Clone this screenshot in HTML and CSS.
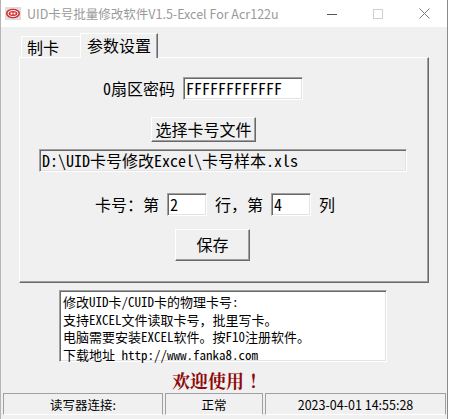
FILE: index.html
```html
<!DOCTYPE html>
<html lang="zh-CN">
<head>
<meta charset="utf-8">
<title>UID卡号批量修改软件</title>
<link rel="stylesheet" href="styles.css">
</head>
<body>
<div class="window">
  <div class="titlebar">
    <svg class="app-icon" width="16" height="13" viewBox="0 0 16 13">
      <rect x="0" y="0" width="16" height="13" fill="#dedede"/>
      <ellipse cx="8" cy="6.5" rx="7" ry="4.8" fill="#d42a2a"/>
      <ellipse cx="8" cy="6.5" rx="5.4" ry="3.4" fill="#ffffff"/>
      <ellipse cx="8" cy="6.5" rx="4.4" ry="2.5" fill="#d42a2a"/>
      <rect x="5.5" y="5.5" width="2" height="2" fill="#ffffff"/>
      <rect x="8.5" y="5.5" width="2" height="2" fill="#ffffff"/>
    </svg>
    <span class="title">UID卡号批量修改软件V1.5-Excel For Acr122u</span>
    <div class="controls">
      <span class="ctl"><svg width="10" height="10" viewBox="0 0 10 10"><path d="M0 5.5H10" stroke="#555" stroke-width="1"/></svg></span>
      <span class="ctl"><svg width="10" height="10" viewBox="0 0 10 10"><rect x="0.5" y="0.5" width="9" height="9" fill="none" stroke="#cfcfcf" stroke-width="1"/></svg></span>
      <span class="ctl"><svg width="11" height="11" viewBox="0 0 11 11"><path d="M0.5 0.5L10.5 10.5M10.5 0.5L0.5 10.5" stroke="#7a7a7a" stroke-width="1"/></svg></span>
    </div>
  </div>

  <div class="client">
    <div class="tabs">
      <div class="tab">制卡</div>
      <div class="tab active">参数设置</div>
    </div>
    <div class="panel">
      <div class="row pwd-row">
        <span class="lbl">0扇区密码</span>
        <div class="edit pwd">FFFFFFFFFFFF</div>
      </div>
      <div class="btn choose">选择卡号文件</div>
      <div class="edit path">D:\UID卡号修改Excel\卡号样本.xls</div>
      <div class="row pos-row">
        <span class="lbl">卡号：第</span>
        <div class="edit num">2</div>
        <span class="lbl">行，第</span>
        <div class="edit num">4</div>
        <span class="lbl">列</span>
      </div>
      <div class="btn save">保存</div>
    </div>
    <div class="info">
      <div class="line">修改UID卡/CUID卡的物理卡号:</div>
      <div class="line">支持EXCEL文件读取卡号，批里写卡。</div>
      <div class="line">电脑需要安装EXCEL软件。按F10注册软件。</div>
      <div class="line">下载地址 http://www.fanka8.com</div>
    </div>
    <div class="welcome">欢迎使用<span class="bang">！</span></div>
  </div>

  <div class="statusbar">
    <div class="sb sb1">读写器连接:</div>
    <div class="sb sb2">正常</div>
    <div class="sb sb3">2023-04-01 14:55:28</div>
  </div>
</div>
</body>
</html>
```
FILE: styles.css
```css
* { box-sizing: border-box; }
html, body { margin: 0; padding: 0; }
body {
  width: 449px;
  height: 419px;
  overflow: hidden;
  background: #ffffff;
  font-family: "Noto Sans CJK SC", sans-serif;
  color: #000;
}
.window {
  width: 448px;
  height: 419px;
  border-left: 1px solid #b5b5b5;
  border-right: 1px solid #8a8a8a;
  background: #f0f0f0;
  display: flex;
  flex-direction: column;
}
.titlebar {
  height: 27px;
  flex: none;
  background: #fff;
  display: flex;
  align-items: center;
}
.app-icon { margin-left: 4px; flex: none; }
.title {
  margin-left: 6px;
  font-size: 12.5px;
  color: #9a9a9a;
  white-space: nowrap;
}
.controls { margin-left: auto; display: flex; height: 27px; }
.ctl {
  width: 46px;
  height: 27px;
  display: flex;
  align-items: center;
  justify-content: center;
}

.client {
  height: 366px;
  flex: none;
  padding-top: 6px;
  font-family: "Noto Sans Mono CJK SC", "Noto Sans CJK SC", monospace;
  font-size: 16px;
}
.tabs {
  display: flex;
  align-items: flex-end;
  margin-left: 20px;
  height: 24px;
  position: relative;
  z-index: 1;
}
.tab {
  width: 59px;
  height: 21px;
  border-top: 1px solid #fff;
  border-left: 1px solid #fff;
  padding-left: 5px;
  line-height: 20px;
  white-space: nowrap;
}
.tab.active {
  width: 78px;
  height: 25px;
  margin-bottom: -1px;
  background: #f0f0f0;
  border-right: 1px solid #696969;
  box-shadow: inset -1px 0 0 #a0a0a0;
  padding-left: 6px;
  line-height: 22px;
}
.panel {
  margin-left: 18px;
  width: 410px;
  height: 226px;
  border-top: 1px solid #fff;
  border-left: 1px solid #fff;
  border-right: 1px solid #696969;
  border-bottom: 1px solid #696969;
  box-shadow: inset -1px -1px 0 #a0a0a0;
  display: flex;
  flex-direction: column;
  align-items: flex-start;
}
.row { display: flex; align-items: center; gap: 8px; }
.lbl { white-space: nowrap; line-height: 23px; }
.edit {
  height: 23px;
  background: #fff;
  border: 1px solid;
  border-color: #a0a0a0 #ffffff #ffffff #a0a0a0;
  box-shadow: inset 1px 1px 0 #696969, inset -1px -1px 0 #e3e3e3;
  padding-left: 2px;
  line-height: 21px;
  white-space: nowrap;
  overflow: hidden;
}
.pwd-row { margin-top: 19px; padding-left: 83px; }
.pwd { width: 120px; }
.btn {
  height: 25px;
  background: #f0f0f0;
  border: 1px solid;
  border-color: #ffffff #696969 #696969 #ffffff;
  box-shadow: inset -1px -1px 0 #a0a0a0;
  text-align: center;
  line-height: 22px;
  white-space: nowrap;
}
.choose { margin-top: 17px; margin-left: 131px; width: 105px; }
.path {
  margin-top: 7px;
  margin-left: 19px;
  width: 368px;
  background: #f0f0f0;
}
.pos-row { margin-top: 21px; padding-left: 75px; }
.num { width: 40px; }
.save {
  margin-top: 13px;
  margin-left: 155px;
  width: 75px;
  height: 32px;
  line-height: 29px;
}
.info {
  margin-top: 7px;
  margin-left: 58px;
  width: 328px;
  height: 72px;
  background: #fff;
  border: 1px solid;
  border-color: #a0a0a0 #ffffff #ffffff #a0a0a0;
  box-shadow: inset 1px 1px 0 #696969, inset -1px -1px 0 #e3e3e3;
  padding: 2px 2px 0 3px;
  font-size: 13px;
  white-space: nowrap;
}
.line { height: 17.5px; line-height: 17.5px; }
.welcome {
  height: 31px;
  padding-top: 6px;
  padding-right: 9px;
  line-height: 24px;
  text-align: center;
  font-family: "Noto Serif CJK SC", "Noto Sans CJK SC", serif;
  font-weight: bold;
  font-size: 18px;
  color: #8e0a0a;
}
.bang { display: inline-block; padding-left: 5px; }
.statusbar {
  height: 22px;
  flex: none;
  display: flex;
  gap: 2px;
  padding-left: 2px;
}
.sb {
  height: 22px;
  border: 1px solid #a0a0a0;
  border-bottom-color: #ffffff;
  font-family: "Noto Sans CJK SC", sans-serif;
  font-size: 12.5px;
  display: flex;
  align-items: center;
  justify-content: center;
  white-space: nowrap;
}
.sb1 { width: 160px; }
.sb2 { width: 98px; }
.sb3 { width: 181px; }
```
